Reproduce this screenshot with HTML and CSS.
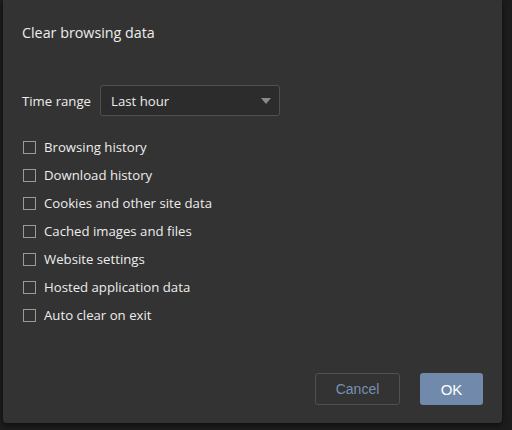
FILE: index.html
```html
<!DOCTYPE html>
<html>
<head>
<meta charset="utf-8">
<link rel="stylesheet" href="styles.css">
</head>
<body>
<div class="dialog">
  <div class="title">Clear browsing data</div>
  <div class="range">
    <span class="range-label">Time range</span>
    <div class="select">
      <span>Last hour</span>
      <span class="arrow"></span>
    </div>
  </div>
  <ul class="options">
    <li><span class="box"></span>Browsing history</li>
    <li><span class="box"></span>Download history</li>
    <li><span class="box"></span>Cookies and other site data</li>
    <li><span class="box"></span>Cached images and files</li>
    <li><span class="box"></span>Website settings</li>
    <li><span class="box"></span>Hosted application data</li>
    <li><span class="box"></span>Auto clear on exit</li>
  </ul>
  <div class="actions">
    <button class="btn cancel">Cancel</button>
    <button class="btn ok">OK</button>
  </div>
</div>
</body>
</html>
```
FILE: styles.css
```css
html, body {
  margin: 0;
  padding: 0;
  width: 512px;
  height: 430px;
  background: #1d1d1d;
  overflow: hidden;
}
body {
  padding: 0 0 0 3px;
  box-sizing: border-box;
}
.dialog {
  width: 499px;
  height: 423px;
  background: #333333;
  border-radius: 0 0 4px 4px;
  box-shadow: 0 2px 6px rgba(0,0,0,0.6);
  box-sizing: border-box;
  padding: 23px 19px 0 19px;
  display: flex;
  flex-direction: column;
  font-family: "Open Sans", "Noto Sans", sans-serif;
  color: #ededed;
}
.title {
  font-size: 14.3px;
  line-height: 20px;
  height: 20px;
}
.range {
  display: flex;
  align-items: center;
  margin-top: 42px;
  gap: 9px;
}
.range-label {
  font-size: 13.2px;
}
.select {
  width: 180px;
  height: 31px;
  box-sizing: border-box;
  border: 1px solid #505050;
  border-radius: 3px;
  background: #2c2c2c;
  display: flex;
  align-items: center;
  justify-content: space-between;
  padding: 0 8px 0 10px;
  font-size: 13.2px;
}
.arrow {
  width: 0;
  height: 0;
  border-left: 5px solid transparent;
  border-right: 5px solid transparent;
  border-top: 6px solid #8a8a8a;
}
.options {
  list-style: none;
  margin: 17px 0 0 1px;
  padding: 0;
}
.options li {
  display: flex;
  align-items: center;
  height: 28px;
  font-size: 13.2px;
}
.box {
  width: 13px;
  height: 13px;
  box-sizing: border-box;
  border: 1px solid #9a9a9a;
  margin: 0 8px 0 0;
}
.actions {
  margin-top: auto;
  margin-bottom: 18px;
  display: flex;
  justify-content: flex-end;
  gap: 20px;
}
.btn {
  height: 32px;
  border-radius: 3px;
  font-family: "Liberation Sans", Arial, sans-serif;
  font-size: 14px;
  cursor: pointer;
}
.cancel {
  width: 85px;
  background: transparent;
  border: 1px solid #505050;
  color: #7890b3;
}
.ok {
  width: 63px;
  background: #7189ab;
  border: none;
  color: #ffffff;
  font-size: 15px;
}
```
